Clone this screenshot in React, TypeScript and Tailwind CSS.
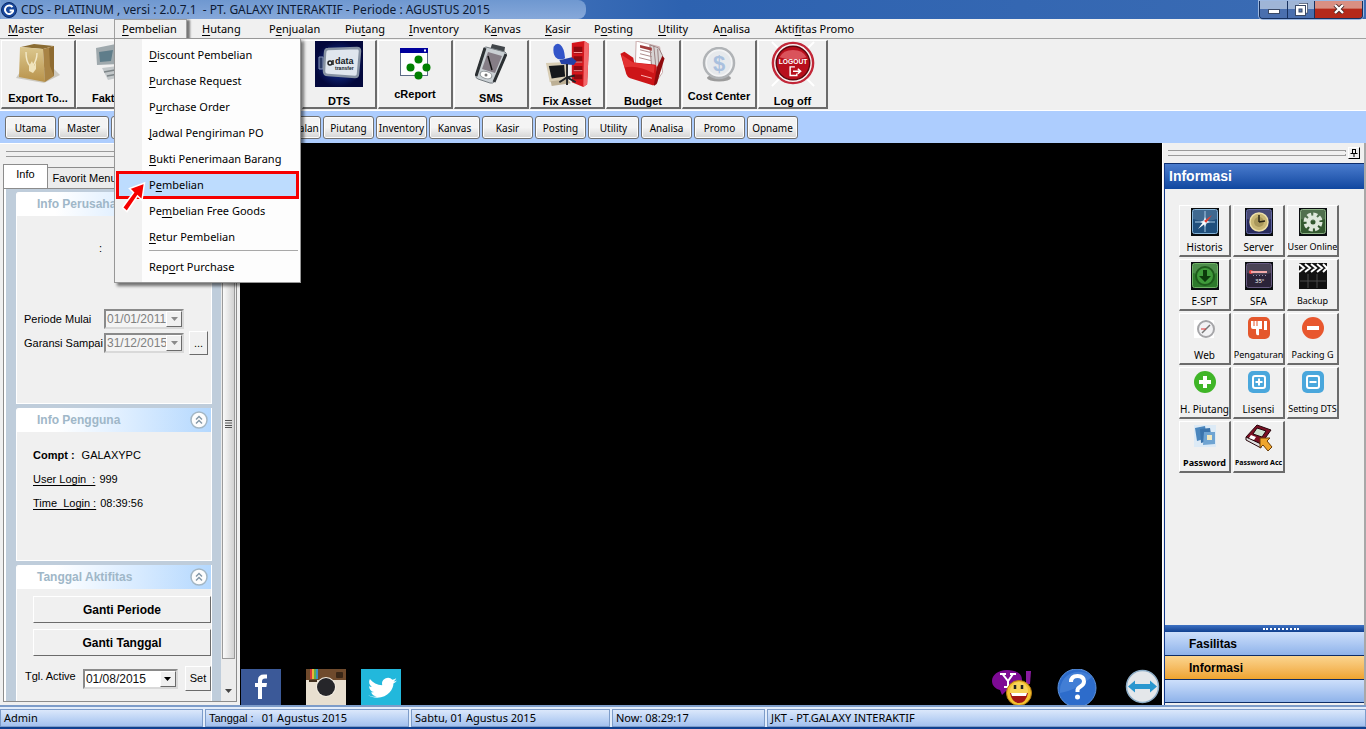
import { useState } from "react";
import type { ReactNode } from "react";
import clsx from "clsx";

type MenuEntry = { label: string; width: string };

// "&" marks the mnemonic letter
const MENUS: MenuEntry[] = [
  { label: "&Master", width: "w-[60px]" },
  { label: "&Relasi", width: "w-[54px]" },
  { label: "&Pembelian", width: "w-[80px]" },
  { label: "&Hutang", width: "w-[67px]" },
  { label: "P&enjualan", width: "w-[76px]" },
  { label: "Piu&tang", width: "w-[64px]" },
  { label: "&Inventory", width: "w-[75px]" },
  { label: "K&anvas", width: "w-[61px]" },
  { label: "&Kasir", width: "w-[49px]" },
  { label: "P&osting", width: "w-[64px]" },
  { label: "&Utility", width: "w-[55px]" },
  { label: "A&nalisa", width: "w-[62px]" },
  { label: "Akti&fitas Promo", width: "w-[100px]" },
];

const PEMBELIAN_ITEMS = [
  "&Discount Pembelian",
  "&Purchase Request",
  "P&urchase Order",
  "&Jadwal Pengiriman PO",
  "&Bukti Penerimaan Barang",
  "P&embelian",
  "Pe&mbelian Free Goods",
  "&Retur Pembelian",
];

// empty entries are unassigned slots
const MODULES = [
  "Utama", "Master", "", "", "", "Penjualan", "Piutang", "Inventory",
  "Kanvas", "Kasir", "Posting", "Utility", "Analisa", "Promo", "Opname",
];

const RAISED =
  "border border-t-white border-l-white border-r-[#6b6b6b] border-b-[#6b6b6b] bg-[#f0f0f0]";

function Mnemonic({ text }: { text: string }) {
  const at = text.indexOf("&");
  if (at < 0) return <>{text}</>;
  return (
    <span>
      {text.slice(0, at)}
      <u className="underline-offset-2">{text[at + 1]}</u>
      {text.slice(at + 2)}
    </span>
  );
}

export default function App() {
  return (
    <div className="flex h-screen min-h-[600px] flex-col overflow-hidden bg-[#f0f0f0] font-['Liberation_Sans',Arial,sans-serif] text-[11px] text-black">
      <TitleBar />
      <MenuBar />
      <Toolbar />
      <nav className="flex h-8 shrink-0 items-center gap-0.5 bg-[#adcdfe] pt-px pl-[5px]">
        {MODULES.map((m, i) => (
          <button
            key={i}
            className="flex h-[23px] w-[51px] shrink-0 items-center justify-center rounded-[3px] border border-[#707070] bg-linear-to-b from-[#f4f4f4] from-50% to-[#d4d4d4] font-['Noto_Sans',sans-serif] text-[10px] leading-3 whitespace-nowrap shadow-[inset_0_0_0_1px_#fcfcfc]"
          >
            {m}
          </button>
        ))}
      </nav>
      <div className="flex min-h-0 flex-1">
        <LeftPanel />
        <Workspace />
        <RightPanel />
      </div>
      <StatusBar />
    </div>
  );
}

function TitleBar() {
  return (
    <header className="flex h-[19px] shrink-0 items-center justify-between bg-linear-to-r from-[#7ba0d4] via-[#2d62b0] via-50% to-[#3b6cb4] pl-px">
      <div className="flex h-full items-center gap-1 rounded-r-lg bg-linear-to-b from-[#6f98d0] to-[#86a8da] pr-24">
        <svg viewBox="0 0 16 16" className="h-4 w-4">
          <circle cx="8" cy="8" r="7.5" fill="#17479c" stroke="#0b2a68" />
          <path d="M11.5 5.2A4.2 4.2 0 1 0 12 9.4V8.6H8.6" fill="none" stroke="#fff" strokeWidth="2" />
        </svg>
        <h1 className="font-['Noto_Sans',sans-serif] text-[12px] leading-4 whitespace-pre text-[#0d1a33]">
          CDS - PLATINUM , versi : 2.0.7.1  - PT. GALAXY INTERAKTIF - Periode : AGUSTUS 2015
        </h1>
      </div>
      <div className="mr-[3px] flex h-[18px] overflow-hidden rounded-b-[4px] border border-t-0 border-[#16305e] shadow-[0_0_0_1px_#9db8e0]">
        <button aria-label="Minimize" className="flex w-7 items-center justify-center border-r border-[#16305e] bg-linear-to-b from-[#9fb5d6] from-45% to-[#4a6fae] to-50%">
          <svg viewBox="0 0 12 12" className="h-3 w-3">
            <rect x="0.5" y="6.5" width="11" height="4" fill="#fff" stroke="#3b4a66" />
          </svg>
        </button>
        <button aria-label="Restore" className="flex w-[27px] items-center justify-center border-r border-[#16305e] bg-linear-to-b from-[#9fb5d6] from-45% to-[#4a6fae] to-50%">
          <svg viewBox="0 0 13 13" className="h-[13px] w-[13px]">
            <path d="M4 1.5h7.500v7.500h-2" fill="none" stroke="#3b4a66" strokeWidth="3" />
            <path d="M4 1.5h7.500v7.500h-2" fill="none" stroke="#fff" strokeWidth="1.4" />
            <rect x="2" y="4" width="7" height="7" fill="#5e7fb8" stroke="#3b4a66" strokeWidth="4" />
            <rect x="2" y="4" width="7" height="7" fill="#fff" stroke="#fff" strokeWidth="2" />
            <rect x="4" y="6" width="3" height="3" fill="#5e7fb8" stroke="#3b4a66" />
          </svg>
        </button>
        <button aria-label="Close" className="flex w-[47px] items-center justify-center bg-linear-to-b from-[#d98f82] from-40% to-[#b5291a] to-50%">
          <svg viewBox="0 0 12 10" className="h-[10px] w-3">
            <path d="M2 1l8 8M10 1l-8 8" stroke="#4a2a2a" strokeWidth="4" />
            <path d="M2 1l8 8M10 1l-8 8" stroke="#fff" strokeWidth="2.4" />
          </svg>
        </button>
      </div>
    </header>
  );
}

function MenuBar() {
  const [open, setOpen] = useState("&Pembelian");
  return (
    <nav className="flex h-5 shrink-0 border-b border-[#a0a0a0] font-['Noto_Sans',sans-serif]">
      {MENUS.map((m) => (
        <div key={m.label} className={clsx("relative shrink-0", m.width)}>
          <button
            onClick={() => setOpen(m.label)}
            className={clsx(
              "flex h-5 items-center border px-[7px] whitespace-nowrap",
              open === m.label
                ? "w-[73px] border-b-0 border-[#a0a0a0] shadow-[3px_1px_2px_#777]"
                : "border-transparent",
            )}
          >
            <Mnemonic text={m.label} />
          </button>
          {m.label === "&Pembelian" && open === m.label && <PembelianMenu />}
        </div>
      ))}
    </nav>
  );
}

function PembelianMenu() {
  return (
    <ul className="absolute top-[19px] left-0 z-20 w-[187px] border border-[#979797] bg-linear-to-r from-[#f1f1f1] from-[27px] to-[#fdfdfd] to-[27px] px-0.5 pt-[3px] pb-0.5 shadow-[3px_3px_3px_#0008]">
      {PEMBELIAN_ITEMS.map((item) => {
        const current = item === "P&embelian";
        return (
          <li key={item} className="relative">
            <button
              className={clsx(
                "flex h-[26px] w-full items-center pl-8 text-left whitespace-nowrap",
                current && "bg-[#bddcfe] outline-3 -outline-offset-2 outline-[#f60000]",
              )}
            >
              <Mnemonic text={item} />
            </button>
            {current && (
              <svg viewBox="0 0 30 42" className="absolute top-0 left-0 z-10 h-[42px] w-[30px]">
                <path
                  d="M27.500 11L12.500 16.500L16.500 20.500L5.500 35.500L10 39.500L20.500 24L25 28Z"
                  fill="#f60000"
                  stroke="#fff"
                  strokeWidth="1.500"
                />
              </svg>
            )}
          </li>
        );
      })}
      <li className="ml-8 border-t border-[#a8a8a8]" />
      <li className="pt-[3px]">
        <button className="flex h-[26px] w-full items-center pl-8">
          <Mnemonic text="Rep&ort Purchase" />
        </button>
      </li>
    </ul>
  );
}

function ToolButton({ label, icon, width = "w-[75px]" }: { label: string; icon: ReactNode; width?: string }) {
  return (
    <button
      className={clsx(
        RAISED,
        width,
        "flex h-[69px] shrink-0 flex-col items-center justify-center gap-2 border-r-2 border-b-2 leading-3 font-bold whitespace-nowrap",
      )}
    >
      {icon}
      <span className="text-[11px]">{label}</span>
    </button>
  );
}

function Toolbar() {
  return (
    <div className="flex h-[72px] shrink-0 items-center gap-px border-b border-white pl-px">
      <div className="flex w-[300px] shrink-0">
        <ToolButton label="Export To..." icon={<BagIcon />} />
        <ToolButton label="Faktur..." icon={<ScannerIcon />} />
      </div>
      <ToolButton label="DTS" icon={<DataTransferIcon />} />
      <ToolButton label="cReport" icon={<ReportIcon />} />
      <ToolButton label="SMS" icon={<PdaIcon />} />
      <ToolButton label="Fix Asset" icon={<AssetIcon />} />
      <ToolButton label="Budget" icon={<FolderIcon />} />
      <ToolButton label="Cost Center" icon={<CoinIcon />} />
      <ToolButton label="Log off" icon={<LogoutIcon />} width="w-[70px]" />
    </div>
  );
}

function BagIcon() {
  return (
    <svg viewBox="0 0 46 40" className="h-10 w-[46px]">
      <defs>
        <linearGradient id="bag" x1="0" y1="0" x2="0" y2="1">
          <stop offset="0" stopColor="#dcc88f" />
          <stop offset="1" stopColor="#b8924a" />
        </linearGradient>
      </defs>
      <path d="M1 34l28 5 16-8-6-6H7z" fill="#b5b0a2" opacity="0.6" />
      <path d="M6 3l22 2 11-3-20-2z" fill="#8a6c33" />
      <path d="M5 3l23 2 2 33-26-5z" fill="url(#bag)" />
      <path d="M28 5l11-3 0 30-9 6z" fill="#a98445" />
      <path d="M34 4l5-2v30l-4-10z" fill="#8e6b31" />
      <path d="M11 8c0 8 2 12 4 14M22 9c0 8-3 11-5 14" fill="none" stroke="#f3e9c8" strokeWidth="1.4" />
      <path d="M14 22l3-5 2 5 2-4 0 7-3 4-4-2z" fill="#f0e3bb" />
    </svg>
  );
}

function ScannerIcon() {
  return (
    <svg viewBox="0 0 46 40" className="h-10 w-[46px]">
      <path d="M6 4l20-4 6 4-3 16-22 1z" fill="#9fa9ad" />
      <path d="M9 8l14-2-2 11-11 1z" fill="#5f7d8a" />
      <path d="M26 0l6 4-3 16-4-2z" fill="#6d777b" />
      <path d="M12 24l24-3 8 9-26 6z" fill="#c3c8ca" />
      <path d="M14 28l22-4M17 32l22-4" stroke="#7d8588" strokeWidth="1.5" />
    </svg>
  );
}

function DataTransferIcon() {
  return (
    <svg viewBox="0 0 48 46" className="h-[46px] w-12">
      <defs>
        <radialGradient id="dts">
          <stop offset="0" stopColor="#1a3fae" />
          <stop offset="1" stopColor="#03083c" />
        </radialGradient>
      </defs>
      <rect width="48" height="46" fill="url(#dts)" />
      <path d="M4 16h4v12H4z" fill="#2c3c66" stroke="#8896bb" />
      <path d="M13 8l29-1q3 0 3 3l-2 23q0 3-3 3l-27-2q-4 0-4-4l1-18q0-4 3-4z" fill="#dfe6ee" stroke="#8793a3" strokeWidth="2.500" />
      <circle cx="15" cy="22" r="2" fill="none" stroke="#222" strokeWidth="1.500" />
      <path d="M18 19v5" stroke="#222" strokeWidth="1.500" />
      <text x="20" y="23" fontSize="9" fontWeight="bold" fill="#14181f">data</text>
      <text x="20" y="29" fontSize="5" fontWeight="bold" fill="#14181f">transfer</text>
    </svg>
  );
}

function ReportIcon() {
  return (
    <svg viewBox="0 0 31 32" className="h-8 w-[31px]">
      <rect x="0.500" y="0.500" width="27" height="27" fill="#fff" stroke="#5c6b86" />
      <rect width="28" height="5" fill="#00009c" />
      <rect x="24" y="1.500" width="2" height="2" fill="#fff" />
      <g fill="#008000">
        <circle cx="18.500" cy="11.500" r="4" />
        <circle cx="10.500" cy="19.500" r="4" />
        <circle cx="26.500" cy="19.500" r="4" />
        <circle cx="18.500" cy="27.500" r="4" />
      </g>
    </svg>
  );
}

function PdaIcon() {
  return (
    <svg viewBox="0 0 32 40" className="h-10 w-8">
      <path d="M17 0l13 3-1 7-14-4z" fill="#41464a" />
      <path d="M11 3l19 5q2 1 1 3L20 37q-2 3-5 2L3 35q-3-1-2-4L9 5q0-2 2-2z" fill="#c9cfd3" stroke="#777d82" />
      <path d="M10 4L1 32M31 10L19 38" stroke="#2c3033" strokeWidth="3" />
      <path d="M13 8l14 4-7 17-13-4z" fill="#857d86" />
      <path d="M13 12l4 14" stroke="#111" strokeWidth="1.500" />
      <ellipse cx="11" cy="31" rx="6" ry="3.500" transform="rotate(16 11 31)" fill="#fff" stroke="#8b9195" />
      <circle cx="11" cy="31" r="1.500" fill="#777" />
    </svg>
  );
}

function AssetIcon() {
  return (
    <svg viewBox="0 0 47 48" className="h-12 w-[47px]">
      <path d="M28 2l13-2 5 3-2 42-4 3-12-5z" fill="#d5161c" />
      <path d="M41 0l5 3-2 42-4 3z" fill="#f4696c" />
      <path d="M30 6h9v7h-9zM30 16h9v7h-9zM30 26h9v6h-9zM30 35h9v5h-9z" fill="#8e0a10" />
      <path d="M30 12h9M30 22h9M30 31h9" stroke="#ff9c9c" />
      <path d="M1 23l22-1 1 18-19 3z" fill="#d8cdb4" />
      <path d="M4 26l16-1 1 12-14 2z" fill="#15181b" />
      <path d="M6 42l18-2 3 4-20 3z" fill="#bdb095" />
      <path d="M9 6q3-5 7-2 4 3 5 14-6 3-10-1-3-4-2-11z" fill="#3355c9" />
      <path d="M15 20l13-3 5 4-3 4-13-1z" fill="#2441a6" />
      <path d="M23 24v16M23 38l-8 5M23 38l9 5M23 38v8M23 38l8-2" stroke="#202326" strokeWidth="2" />
    </svg>
  );
}

function FolderIcon() {
  return (
    <svg viewBox="0 0 46 47" className="h-[47px] w-[46px]">
      <path d="M16 0l24 6 3 26-8 12-20-14z" fill="#fff" stroke="#c9a9a9" />
      <path d="M30 4l9 3 4 8-6 28-5-14z" fill="#d8d4d4" stroke="#9b8080" />
      <path d="M34 5l2 20M38 8l1 16" stroke="#9b8080" />
      <path d="M20 9l12 3M20 13l12 3M19 17l12 3" stroke="#a88" />
      <path d="M20 4l12 3v3l-12-3z" fill="#a03a3a" />
      <path d="M0 13l4-2 9 6 1 5 20 2q3 0 3 3l-1 15q-1 4-4 3L10 38q-3-1-4-4z" fill="#cd1518" />
      <path d="M1 14l12 8 22 3-1 8Q18 24 4 27z" fill="#e83a3a" opacity="0.8" />
      <path d="M37 27l6-12 2 3-8 26-3 2z" fill="#8f0a0d" />
      <path d="M21 35l11 3" stroke="#fbb" />
    </svg>
  );
}

function CoinIcon() {
  return (
    <svg viewBox="0 0 34 35" className="h-[35px] w-[34px]">
      <ellipse cx="17" cy="31" rx="12" ry="3.500" fill="#9b9b9b" />
      <circle cx="17" cy="16" r="15" fill="#f3f4f5" stroke="#b0b3b6" strokeWidth="2.500" />
      <circle cx="17" cy="16" r="12" fill="#e6e9ec" />
      <text x="17" y="24" fontSize="22" fontWeight="bold" textAnchor="middle" fill="#a9c0de">$</text>
    </svg>
  );
}

function LogoutIcon() {
  return (
    <svg viewBox="0 0 46 48" className="h-12 w-[46px]">
      <path d="M1 1l10 10M45 1L35 11M1 47l10-10M45 47L35 37" stroke="#fff" strokeWidth="2" />
      <circle cx="23" cy="23" r="21" fill="#f7f2f2" stroke="#c22738" strokeWidth="2.500" />
      <circle cx="23" cy="23" r="17.500" fill="#b80f1c" stroke="#5e070e" strokeWidth="1.500" />
      <path d="M9 17a15 12 0 0 1 28 0q-14 5-28 0z" fill="#e2646c" opacity="0.8" />
      <text x="23" y="24" fontSize="7" fontWeight="bold" textAnchor="middle" fill="#fff">LOGOUT</text>
      <path d="M25 27h-5v9h7v-2M23 31.500h8M28 29l3 2.500-3 2.500" fill="none" stroke="#fff" strokeWidth="1.500" />
    </svg>
  );
}

function Gripper() {
  return (
    <div className="flex h-[6px] flex-1 flex-col justify-between">
      <div className="h-0.5 border-t border-r border-t-[#9a9a9a] border-r-[#9a9a9a]" />
      <div className="h-0.5 border-r border-b border-r-[#9a9a9a] border-b-[#9a9a9a]" />
    </div>
  );
}

function Card({ title, className, children }: { title: string; className: string; children: ReactNode }) {
  return (
    <section className={clsx("flex flex-col overflow-hidden rounded-tl-[3px] border border-t-0 border-white bg-[#f0f0f0]", className)}>
      <header className="flex h-6 shrink-0 items-center justify-between bg-linear-to-r from-white from-20% to-[#b4d8fe] pr-[3px] pl-5">
        <h2 className="text-[12px] font-bold text-[#9fb7c8]">{title}</h2>
        <button aria-label={`Tutup ${title}`}>
          <svg viewBox="0 0 18 18" className="h-[18px] w-[18px]">
            <circle cx="9" cy="9" r="8" fill="#fdfdfd" stroke="#a3b6c4" strokeWidth="1.500" />
            <path d="M6 8.500l3-3 3 3M6 12.500l3-3 3 3" fill="none" stroke="#8296a6" strokeWidth="1.400" />
          </svg>
        </button>
      </header>
      {children}
    </section>
  );
}

function InfoRow({ label, value, className }: { label: string; value: string; className: string }) {
  return (
    <div className="flex gap-1 whitespace-pre">
      <dt className={className}>{label}</dt>
      <dd>{value}</dd>
    </div>
  );
}

function DateSelect({ id, value, disabled, className }: { id: string; value: string; disabled?: boolean; className: string }) {
  return (
    <div className={clsx("relative h-5 border-2 border-t-[#8a8a8a] border-r-[#d9d9d9] border-b-[#d9d9d9] border-l-[#8a8a8a]", className)}>
      <select
        id={id}
        disabled={disabled}
        className={clsx(
          "block h-4 w-full appearance-none pl-px text-[12px] leading-4 opacity-100",
          disabled ? "bg-[#f4f4f4] text-[#808080]" : "bg-white text-[#111]",
        )}
      >
        <option>{value}</option>
      </select>
      <span className={clsx(RAISED, "pointer-events-none absolute top-0 right-0 flex h-4 w-4 items-center justify-center")}>
        <svg viewBox="0 0 7 4" className="h-1 w-[7px]">
          <path d="M0 0h7L3.500 4z" fill={disabled ? "#8a8a8a" : "#000"} />
        </svg>
      </span>
    </div>
  );
}

function LeftPanel() {
  return (
    <aside className="flex w-60 shrink-0 flex-col border-t border-white">
      <div className="flex h-5 items-center px-1.5">
        <Gripper />
      </div>
      <div className="flex h-6 shrink-0 items-end pl-[3px]">
        <button className="h-6 w-[45px] border border-b-0 border-[#8c8c8c] bg-white pb-1">Info</button>
        <button className="h-[21px] w-20 border border-b-0 border-l-0 border-[#8c8c8c] bg-[#ececec] pr-1.5 whitespace-nowrap">Favorit Menu</button>
      </div>
      <div className="mx-[3px] mb-[3px] flex min-h-0 flex-1 border border-[#8c8c8c] bg-white pl-0.5">
        <div className="flex min-h-0 flex-1 flex-col gap-1 overflow-hidden bg-[#bfcddb] pt-[3px] pr-[9px] pl-2.5">
          <Card title="Info Perusahaan" className="h-[212px] shrink-0">
            <div className="flex h-[93px] shrink-0 items-start pt-6 pl-[82px]">:</div>
            <div className="grid grid-cols-[80px_80px_24px] items-center gap-y-0.5 pl-[7px]">
              <label htmlFor="mulai" className="whitespace-nowrap">Periode Mulai</label>
              <DateSelect id="mulai" value="01/01/2011" disabled className="w-20" />
              <span />
              <label htmlFor="sampai" className="whitespace-nowrap">Garansi Sampai</label>
              <DateSelect id="sampai" value="31/12/2015" disabled className="w-20" />
              <button className={clsx(RAISED, "ml-[5px] h-6 w-[19px] leading-3")}>...</button>
            </div>
          </Card>
          <Card title="Info Pengguna" className="h-[153px] shrink-0">
            <dl className="pt-[11px] pl-4 leading-6">
              <InfoRow label="Compt :" value=" GALAXYPC" className="font-bold" />
              <InfoRow label="User Login  :" value="999" className="underline underline-offset-2" />
              <InfoRow label="Time  Login :" value="08:39:56" className="underline underline-offset-2" />
            </dl>
          </Card>
          <Card title="Tanggal Aktifitas" className="min-h-0 flex-1 border-b-0">
            <div className="flex flex-col gap-1.5 pt-[7px] pl-4">
              <button className={clsx(RAISED, "h-[27px] text-[12px] font-bold")}>Ganti Periode</button>
              <button className={clsx(RAISED, "h-[27px] text-[12px] font-bold")}>Ganti Tanggal</button>
            </div>
            <div className="flex items-center justify-between pt-2.5 pl-2">
              <label htmlFor="aktif" className="pb-1 whitespace-nowrap">Tgl. Active</label>
              <DateSelect id="aktif" value="01/08/2015" className="w-[95px]" />
              <button className={clsx(RAISED, "h-[25px] w-[26px]")}>Set</button>
            </div>
          </Card>
        </div>
        <div className="flex w-[15px] flex-col items-center bg-[#ececec]">
          <div className="flex w-[13px] flex-1 items-center justify-center border border-[#9a9a9a] bg-linear-to-r from-[#fafafa] to-[#d2d2d2]">
            <svg viewBox="0 0 7 8" className="h-2 w-[7px]">
              <path d="M0 .5h7M0 3h7M0 5.500h7M0 7.500h7" stroke="#555" />
            </svg>
          </div>
          <div className="flex h-[42px] items-end pb-2">
            <svg viewBox="0 0 7 4" className="h-1 w-[7px]">
              <path d="M0 0h7L3.500 4z" fill="#444" />
            </svg>
          </div>
        </div>
      </div>
    </aside>
  );
}

function Workspace() {
  return (
    <main className="flex min-w-0 flex-1 flex-col justify-end bg-black">
      <div className="flex h-9 items-end justify-between pr-0.5 pl-px">
        <div className="flex">
          <a href="#facebook" aria-label="Facebook">
            <svg viewBox="0 0 40 36" className="h-9 w-10">
              <rect width="40" height="36" fill="#3b5998" />
              <path d="M17 30V18h-3v-4h3v-3q0-5.500 6-5.500h3v4h-2q-3 0-3 3v1.500h5l-.600 4H21v12z" fill="#fff" />
            </svg>
          </a>
          <a href="#instagram" aria-label="Instagram" className="ml-[25px]">
            <svg viewBox="0 0 40 36" className="h-9 w-10">
              <rect width="40" height="36" fill="#e8dfd0" />
              <rect width="40" height="11" fill="#6f4a2c" />
              <path d="M4 0h2v10H4z" fill="#d8373c" />
              <path d="M6 0h2v10H6z" fill="#e9b53a" />
              <path d="M8 0h2v10H8z" fill="#5fae4b" />
              <path d="M10 0h2v10h-2z" fill="#3d8fc4" />
              <rect x="30" y="3" width="7" height="6" rx="1" fill="#3a2717" />
              <rect x="3" y="11" width="8" height="2" fill="#42311f" />
              <circle cx="20" cy="18" r="10" fill="#f3ede2" />
              <circle cx="20" cy="18" r="9" fill="#26262a" />
            </svg>
          </a>
          <a href="#twitter" aria-label="Twitter" className="ml-[15px]">
            <svg viewBox="0 0 40 36" className="h-9 w-10">
              <rect width="40" height="36" fill="#22b8dc" />
              <path
                d="M36 11.500c-1 .600-2.200.900-3.400 1 1.200-.700 2.100-1.900 2.600-3.200-1.200.700-2.400 1.200-3.800 1.400a6 6 0 0 0-10.200 5.500c-5-.300-9.400-2.700-12.300-6.300a6 6 0 0 0 1.900 8c-1 0-1.900-.300-2.700-.700 0 2.900 2 5.300 4.800 5.900-.900.200-1.800.3-2.700.1.800 2.400 3 4.100 5.600 4.100A12 12 0 0 1 7 26c2.700 1.700 5.800 2.700 9.200 2.700 11 0 16.500-9.300 16.200-14.200 1.500-.8 2.600-1.800 3.600-3z"
                fill="#fff"
              />
            </svg>
          </a>
        </div>
        <div className="flex">
          <button aria-label="Yahoo Messenger">
            <svg viewBox="0 0 40 36" className="h-9 w-10">
              <path d="M15 1C6 1 0 6 0 12c0 5 4 8 8 9l2 5 4-4c9 0 16-4 16-11S23 1 15 1z" fill="#7d0a94" />
              <path d="M34 2h5l-1 13h-4z" fill="#8a1ba0" />
              <path d="M8 5h6M18 5h6M10.500 5l5.500 7 5-7M16 12v6M12 18h7" fill="none" stroke="#fff" strokeWidth="2" />
              <circle cx="27" cy="24" r="12.500" fill="#f3c22e" stroke="#b87c14" />
              <circle cx="27" cy="22" r="9" fill="#fbe07a" opacity="0.600" />
              <path d="M23 16v4M30 16v4" stroke="#222" strokeWidth="2.500" />
              <path d="M18 24h18q-2 10-9 10t-9-10z" fill="#a31515" />
              <path d="M19 24h16l-1 3H20z" fill="#fff" />
            </svg>
          </button>
          <button aria-label="Bantuan" className="ml-[25px]">
            <svg viewBox="0 0 40 36" className="h-9 w-10">
              <circle cx="20" cy="19" r="19" fill="#2d6ccb" stroke="#5d93dd" />
              <path d="M3 24Q18 22 35 8A19 19 0 0 0 3 24z" fill="#5890df" opacity="0.500" />
              <path d="M14 13q0-6 6.500-6t6.500 5.500q0 3-3.500 5T20.500 22v1" fill="none" stroke="#fff" strokeWidth="4" />
              <circle cx="20.500" cy="28" r="2.500" fill="#fff" />
            </svg>
          </button>
          <button aria-label="TeamViewer" className="ml-7">
            <svg viewBox="0 0 35 36" className="h-9 w-[35px]">
              <circle cx="17.500" cy="17.500" r="16" fill="#e4e7ea" stroke="#8eaec8" strokeWidth="1.500" />
              <path d="M3 17.500l7-6v3.500h15v-3.500l7 6-7 6V20H10v3.500z" fill="#2a97cf" />
            </svg>
          </button>
        </div>
      </div>
    </main>
  );
}

function Tile({ bg, frame, children }: { bg: string; frame: string; children: ReactNode }) {
  return (
    <svg viewBox="0 0 28 28" className="h-7 w-7 shrink-0">
      <rect width="28" height="28" fill="#0a0d10" />
      <rect x="1.500" y="1.500" width="25" height="24" rx="2" fill={bg} stroke={frame} />
      <path d="M2 2h24v9Q14 15 2 11z" fill="#fff" opacity="0.150" />
      {children}
    </svg>
  );
}

const INFO_BUTTONS: { label: string; text: string; icon: ReactNode }[] = [
  {
    label: "Historis",
    text: "text-[10px]",
    icon: (
      <Tile bg="#1f4f7d" frame="#86b4d8">
        <path d="M14 3v21M4 14h20" stroke="#a9cbe6" />
        <path d="M14 9l1.500 3.500L19 14l-3.500 1.500L14 19l-1.500-3.500L9 14l3.500-1.500z" fill="#dbe9f4" />
        <path d="M21 7l-6 8-2-2z" fill="#e63b2e" />
        <path d="M7 21l6-8 2 2z" fill="#fff" />
      </Tile>
    ),
  },
  {
    label: "Server",
    text: "text-[10px]",
    icon: (
      <Tile bg="#272a5c" frame="#6468a3">
        <circle cx="14" cy="14" r="9" fill="#c9b674" stroke="#eee0a8" strokeWidth="1.500" />
        <circle cx="14" cy="14" r="5" fill="#a9975b" />
        <path d="M14 14V7M14 14l6-1" stroke="#2a2514" strokeWidth="1.500" />
      </Tile>
    ),
  },
  {
    label: "User Online",
    text: "text-[9px]",
    icon: (
      <Tile bg="#33582f" frame="#8bb085">
        <circle cx="14" cy="14" r="7.500" fill="none" stroke="#dfe8dc" strokeWidth="4" strokeDasharray="3.900 2" />
        <circle cx="14" cy="14" r="4.500" fill="none" stroke="#dfe8dc" strokeWidth="4" />
      </Tile>
    ),
  },
  {
    label: "E-SPT",
    text: "text-[10px]",
    icon: (
      <Tile bg="#2d7a2b" frame="#6fb066">
        <circle cx="14" cy="14" r="9" fill="#3f9a3a" stroke="#1e5a1c" strokeWidth="2" />
        <path d="M12 8h4v6h4l-6 6-6-6h4z" fill="#0c3a0b" />
      </Tile>
    ),
  },
  {
    label: "SFA",
    text: "text-[10px]",
    icon: (
      <Tile bg="#2b2338" frame="#675a80">
        <circle cx="6" cy="10" r="2" fill="#e44" />
        <path d="M6 10h16" stroke="#f1a9a9" strokeWidth="2" />
        <path d="M8 13.500h13" stroke="#998fae" strokeDasharray="1 2" />
        <text x="10" y="21" fontSize="6" fill="#fff">35°</text>
      </Tile>
    ),
  },
  {
    label: "Backup",
    text: "text-[9px]",
    icon: (
      <svg viewBox="0 0 30 28" className="h-7 w-[30px] shrink-0">
        <path d="M1 1h28v26H1z" fill="#111" />
        <path d="M1 2l5 4-5 4M7 2l5 4-5 4M13 2l5 4-5 4M19 2l5 4-5 4M25 2l4 4-4 4" fill="none" stroke="#fff" strokeWidth="2" />
        <path d="M2 19h26M10 12v14M19 12v14" stroke="#4a4a4a" />
      </svg>
    ),
  },
  {
    label: "Web",
    text: "text-[10px]",
    icon: (
      <svg viewBox="0 0 24 24" className="h-6 w-6 shrink-0">
        <path d="M1 4h20v18H1z" fill="#fff" />
        <circle cx="13" cy="13" r="8" fill="#f2f2f4" stroke="#a5a5a8" strokeWidth="2" />
        <path d="M13 13l4-4M13 13l-4 4" stroke="#777" strokeWidth="1.500" />
        <path d="M13 13H8" stroke="#d33" />
      </svg>
    ),
  },
  {
    label: "Pengaturan",
    text: "text-[9px]",
    icon: (
      <svg viewBox="0 0 24 24" className="h-6 w-6 shrink-0">
        <rect x="1" y="1" width="22" height="22" rx="5" fill="#e4572c" />
        <path d="M4 5h11v8h-3v6q-3 1-3-2v-4H6q-2 0-2-2z" fill="#fff" />
        <path d="M7 5v5M10 5v5" stroke="#e4572c" />
        <path d="M17 5h3v9h-3z" fill="#fff" />
      </svg>
    ),
  },
  {
    label: "Packing G",
    text: "text-[9px]",
    icon: (
      <svg viewBox="0 0 24 24" className="h-6 w-6 shrink-0">
        <circle cx="12" cy="12" r="11" fill="#e8572e" />
        <rect x="6" y="10" width="12" height="4" fill="#fff" />
      </svg>
    ),
  },
  {
    label: "H. Piutang",
    text: "text-[10px]",
    icon: (
      <svg viewBox="0 0 24 24" className="h-6 w-6 shrink-0">
        <circle cx="12" cy="12" r="11" fill="#3fb527" />
        <path d="M10 6h4v4h4v4h-4v4h-4v-4H6v-4h4z" fill="#fff" />
      </svg>
    ),
  },
  {
    label: "Lisensi",
    text: "text-[10px]",
    icon: (
      <svg viewBox="0 0 24 24" className="h-6 w-6 shrink-0">
        <rect x="1" y="1" width="22" height="22" rx="5" fill="#4aa7dc" />
        <rect x="6" y="6" width="12" height="12" rx="2" fill="none" stroke="#fff" strokeWidth="2" />
        <path d="M12 8.500v7M8.500 12h7" stroke="#fff" strokeWidth="2" />
      </svg>
    ),
  },
  {
    label: "Setting DTS",
    text: "text-[9px]",
    icon: (
      <svg viewBox="0 0 24 24" className="h-6 w-6 shrink-0">
        <rect x="1" y="1" width="22" height="22" rx="5" fill="#4aa7dc" />
        <rect x="6" y="6" width="12" height="12" rx="2" fill="none" stroke="#fff" strokeWidth="2" />
        <path d="M8.500 12h7" stroke="#fff" strokeWidth="2" />
      </svg>
    ),
  },
  {
    label: "Password",
    text: "text-[9px] font-bold",
    icon: (
      <svg viewBox="0 0 24 24" className="h-6 w-6 shrink-0">
        <rect x="1" y="1" width="22" height="22" fill="#dceaf6" />
        <path d="M2 4l10-2 2 12-10 3z" fill="#4b86bd" />
        <path d="M7 5l10-1 2 12-11 3z" fill="#3b74ac" />
        <path d="M11 8h11v12l-12 1z" fill="#6fa4d2" />
        <path d="M14 11h5v5h-5z" fill="#f3e9c0" />
      </svg>
    ),
  },
  {
    label: "Password Acc",
    text: "text-[7px] font-bold",
    icon: (
      <svg viewBox="0 0 28 28" className="h-7 w-7 shrink-0">
        <path d="M1 13L12 1l14 5-10 14z" fill="#7c1024" stroke="#26050b" />
        <path d="M1 13l15 7v4L1 16z" fill="#ddd" stroke="#26050b" />
        <path d="M12 4l9 3-4 6-9-3z" fill="#cfe2d2" stroke="#26050b" />
        <path d="M6 11l5 2-2 3-5-2z" fill="#fff" />
        <path d="M15 14h10l-3 3 5 6-4 4-5-6-3 3z" fill="#f0a52b" stroke="#6b3c06" />
      </svg>
    ),
  },
];

function RightPanel() {
  return (
    <aside className="flex w-[204px] shrink-0 flex-col border-r-2 border-l border-r-[#a8a8a8] border-l-white pl-px">
      <div className="flex h-5 shrink-0 items-center gap-0.5 pr-1 pl-1">
        <Gripper />
        <button aria-label="Pin" className={clsx(RAISED, "flex h-3 w-3 items-center justify-center border-r-black border-b-black")}>
          <svg viewBox="0 0 8 8" className="h-2 w-2">
            <path d="M2.500 0v4.500M5.500 0v4.500M2 .5h4M.5 4.500h7M4 4.500V8" stroke="#000" fill="none" />
          </svg>
        </button>
      </div>
      <div className="flex min-h-0 flex-1 flex-col border-l border-[#12398c] pb-0.5">
        <h2 className="flex h-[26px] shrink-0 items-center border-t border-[#0d2d6c] bg-linear-to-b from-[#4a7cce] to-[#0f479f] pl-1 text-[14px] font-bold text-white">
          Informasi
        </h2>
        <div className="flex-1 overflow-hidden">
          <div className="grid w-max grid-cols-[52px_52px_52px] gap-0.5 pt-4 pl-3.5">
            {INFO_BUTTONS.map((b) => (
              <button
                key={b.label}
                className={clsx(
                  RAISED,
                  "flex h-[52px] flex-col items-center justify-between overflow-hidden border-r-2 border-b-2 py-0.5 font-['Noto_Sans',sans-serif] leading-3 whitespace-nowrap",
                  b.text,
                )}
              >
                {b.icon}
                {b.label}
              </button>
            ))}
          </div>
        </div>
        <div className="flex h-[7px] shrink-0 items-center justify-center bg-linear-to-b from-[#3f73c4] to-[#0f3f8f] pl-8">
          <span className="w-9 border-t-2 border-dotted border-white" />
        </div>
        <button className="h-6 shrink-0 border-b border-[#0c2c66] bg-linear-to-b from-[#cddffb] to-[#8fb3ea] pl-6 text-left text-[12px] font-bold">
          Fasilitas
        </button>
        <button className="h-6 shrink-0 border-b border-[#0c2c66] bg-linear-to-b from-[#fbd58e] to-[#efa42c] pl-6 text-left text-[12px] font-bold">
          Informasi
        </button>
        <div className="h-[23px] shrink-0 border-b border-[#0c2c66] bg-linear-to-b from-[#cddffb] to-[#8fb3ea]" />
      </div>
    </aside>
  );
}

function StatusBar() {
  const cell =
    "flex items-center border border-[#7d9cc9] bg-linear-to-b from-[#dbe8fb] to-[#a3c1ef] pl-[3px] whitespace-nowrap font-['Noto_Sans',sans-serif]";
  return (
    <footer className="flex h-6 shrink-0 gap-0.5 border-t-2 border-b-2 border-t-[#7d9cc9] border-b-[#0f3f8f] bg-[#e3edfb] pt-0.5">
      <div className={clsx(cell, "w-[203px]")}>Admin</div>
      <div className={clsx(cell, "w-[204px] gap-2")}>
        <span className="font-['Liberation_Sans',sans-serif]">Tanggal :</span>
        <span>01 Agustus 2015</span>
      </div>
      <div className={clsx(cell, "w-[199px]")}>Sabtu, 01 Agustus 2015</div>
      <div className={clsx(cell, "w-[153px]")}>Now: 08:29:17</div>
      <div className={clsx(cell, "flex-1")}>JKT - PT.GALAXY INTERAKTIF</div>
    </footer>
  );
}
